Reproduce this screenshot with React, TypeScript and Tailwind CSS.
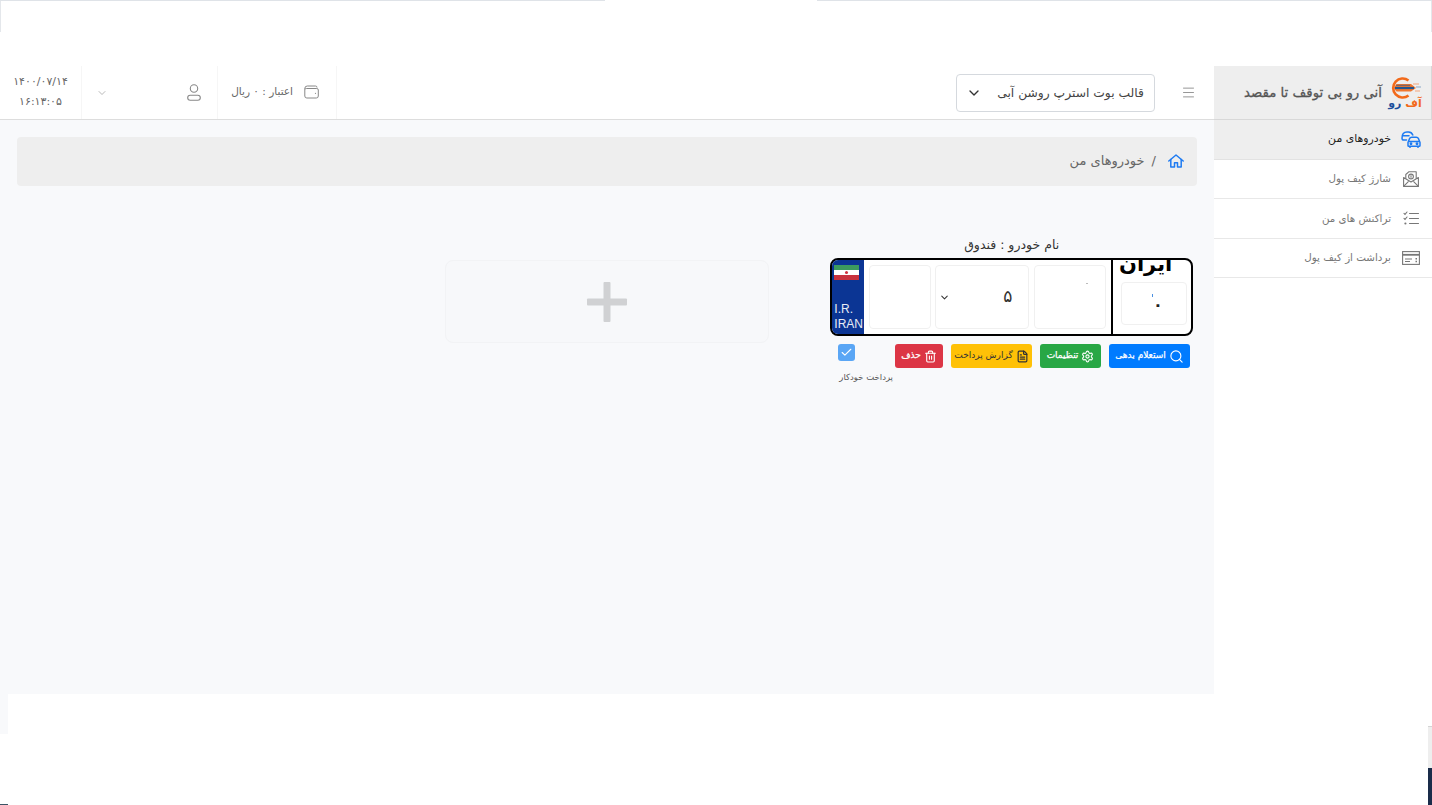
import React from 'react';
import { ChevronDown, Menu, Search, Settings, FileText, Trash2, Check } from 'lucide-react';

const CarsIcon = () => (
  <svg width="20" height="17" viewBox="0 0 20 17" fill="none" stroke="#1e7bf2" strokeWidth="1.5" strokeLinecap="round" strokeLinejoin="round">
    <path d="M5.500 9H2.800A1.800 1.800 0 0 1 1 7.200C1 3.500 3 1 6 1h1.500c2 0 3.500 1 4.300 3" />
    <path d="M2 4.800h6" />
    <path d="M7 14.500v-3L8.500 7.700A2.500 2.500 0 0 1 10.800 6.300h4.400a2.500 2.500 0 0 1 2.300 1.400L19 11.500v3a.8.8 0 0 1-.8.8H7.800a.8.8 0 0 1-.8-.8z" />
    <path d="M8 10.500h10" />
    <circle cx="10" cy="12.800" r=".7" fill="#1e7bf2" />
    <circle cx="16" cy="12.800" r=".7" fill="#1e7bf2" />
    <path d="M9 15.500v1M17 15.500v1" />
  </svg>
);

const EnvelopeIcon = () => (
  <svg width="16" height="16" viewBox="0 0 16 16" fill="none" stroke="#777" strokeWidth="1.100" strokeLinejoin="round">
    <path d="M.6 6.500V15.400h14.800V6.500L8 11 .6 6.500z" />
    <path d="M2.800 7.800V3.500L6 .7h7.200v7.100" />
    <circle cx="8" cy="5.500" r="2.400" />
    <path d="M8 4.300v2.400" />
    <path d="M.6 15.400l5-5M15.400 15.400l-5-5" />
  </svg>
);

const ChecklistIcon = () => (
  <svg width="16" height="15" viewBox="0 0 16 15" fill="none" stroke="#777" strokeWidth="1.100" strokeLinecap="round">
    <path d="M1 2.400l1 1 2-2.400M1 7.400l1 1 2-2.400" />
    <circle cx="2.400" cy="12.500" r="1.100" fill="#777" stroke="none" />
    <path d="M6.500 2.500h9M6.500 7.500h9M6.500 12.500h9" />
  </svg>
);

const CardIcon = () => (
  <svg width="18" height="14" viewBox="0 0 18 14" fill="none" stroke="#777" strokeWidth="1.100">
    <rect x=".6" y=".6" width="16.800" height="12.800" />
    <path d="M.6 3.800h16.800" strokeWidth="1.800" />
    <path d="M3 8h7M3 10.500h5" />
    <path d="M13.500 7.800h1.500M13.500 10.500h1.500" strokeWidth="1.400" />
  </svg>
);

const WalletIcon = () => (
  <svg width="15" height="14" viewBox="0 0 15 14" fill="none" stroke="#888" strokeWidth="1">
    <path d="M.8 3.500V11a2 2 0 0 0 2 2h9.500a2 2 0 0 0 2-2V5a1.500 1.500 0 0 0-1.500-1.500H2.600A1.800 1.800 0 0 1 .8 3.500zm0 0A2.500 2.500 0 0 1 3.300 1h8.200a1.500 1.500 0 0 1 1.500 1.500" />
    <circle cx="11.500" cy="8.300" r=".6" fill="#888" stroke="none" />
  </svg>
);

const UserIcon = () => (
  <svg width="14" height="17" viewBox="0 0 14 17" fill="none" stroke="#888" strokeWidth="1.100">
    <circle cx="7" cy="4.500" r="3.700" />
    <rect x=".7" y="11.300" width="12.600" height="5" rx="2.500" />
  </svg>
);

const HomeIcon = () => (
  <svg width="16" height="14" viewBox="0 0 16 14" fill="none" stroke="#1e7bf2" strokeWidth="1.500" strokeLinejoin="round" strokeLinecap="round">
    <path d="M.8 7L8 1l7.200 6" />
    <path d="M2.800 5.500V13h3.700V8.800h3V13h3.700V5.500" />
  </svg>
);

const Logo = () => (
  <div className="flex flex-col items-center w-[32px] shrink-0">
    <svg width="32" height="24" viewBox="0 0 32 24" fill="none">
      <path d="M19.500 4.500A9.500 9.500 0 1 0 19.500 19.500" stroke="#f26a1b" strokeWidth="2.600" />
      <path d="M4.500 12L7.500 8h14.500l5 4-5 3.500H7.500z" fill="#f0772f" />
      <path d="M6 12h19" stroke="#22568f" strokeWidth="2.200" />
      <path d="M7 9.300h14" stroke="#22568f" strokeWidth=".7" />
      <path d="M24 8h6M26 15h5" stroke="#f5a57a" strokeWidth="1" />
      <path d="M27 11h5" stroke="#8aa6c5" strokeWidth="1" />
    </svg>
    <div className="text-[11px] leading-[11px] font-bold whitespace-nowrap -mt-[2px]">
      <span className="text-[#f26a1b]">آف</span>
      <span className="text-[#1b4f9c]"> رو</span>
    </div>
  </div>
);

const menuItems = [
  { label: 'خودروهای من', icon: <CarsIcon />, active: true },
  { label: 'شارژ کیف پول', icon: <EnvelopeIcon /> },
  { label: 'تراکنش های من', icon: <ChecklistIcon /> },
  { label: 'برداشت از کیف پول', icon: <CardIcon /> },
];

const Sidebar = () => (
  <aside className="w-[218px] shrink-0 bg-white">
    <div className="h-[54px] bg-[#eeeeee] border-r border-b border-[#d8d8d8] flex items-center pr-[10px] gap-[7px]">
      <Logo />
      <span className="text-[13.300px] text-[#555] [-webkit-text-stroke:0.3px_#555]">آنی رو بی توقف تا مقصد</span>
    </div>
    {menuItems.map(item => (
      <div
        key={item.label}
        className={`h-[39.500px] flex items-center border-b pr-[11px] ${item.active ? 'bg-[#eeeeee] border-[#e2e2e2] text-[#222]' : 'bg-white border-[#e8e8e8] text-[#777]'}`}
      >
        <span className="w-[20px] flex justify-center shrink-0">{item.icon}</span>
        <span className={`mr-[10px] ${item.active ? 'text-[10.900px]' : 'text-[10.300px]'}`}>{item.label}</span>
      </div>
    ))}
  </aside>
);

const Header = () => (
  <header className="h-[54px] bg-white border-b border-[#dddddd] flex items-stretch">
    <div className="w-[59px] flex items-center pr-[18px] shrink-0">
      <Menu size={15} color="#888" strokeWidth={1.4} />
    </div>
    <div className="w-[199px] h-[38px] mt-[8px] bg-white border border-[#d5d9de] rounded-[4px] flex items-center justify-between pr-[10px] pl-[9px] shrink-0">
      <span className="text-[12.300px] text-[#444]">قالب بوت استرپ روشن آبی</span>
      <ChevronDown size={16} color="#333" strokeWidth={2} />
    </div>
    <div className="w-[620px] border-l border-[#f6f6f6] shrink-0" />
    <div className="w-[119px] border-l border-[#f6f6f6] flex items-center shrink-0 pr-[17px] gap-[11px] pb-[1px]">
      <WalletIcon />
      <span className="text-[10.500px] text-[#666]">اعتبار : ۰ ریال</span>
    </div>
    <div className="w-[136px] border-l border-[#f6f6f6] flex items-center shrink-0 pr-[16px]">
      <UserIcon />
      <ChevronDown size={12} color="#999" strokeWidth={1.4} className="shrink-0 mr-[79px]" />
    </div>
    <div className="flex-1 flex flex-col items-center justify-center text-[11px] leading-[20px] text-[#666] -mt-[2px]">
      <span dir="ltr">۱۴۰۰/۰۷/۱۴</span>
      <span dir="ltr">۱۶:۱۳:۰۵</span>
    </div>
  </header>
);

const PlateBox = ({ className, children }: { className: string; children?: React.ReactNode }) => (
  <div className={`h-[64px] bg-white border border-[#f0f0f0] rounded-[4px] relative ${className}`}>{children}</div>
);

const Plate = () => (
  <div dir="ltr" className="h-[78px] border-2 border-black rounded-[8px] bg-white flex overflow-hidden">
    <div className="w-[32px] bg-[#0b3594] shrink-0 flex flex-col justify-between pl-[2px] pt-[5px] text-[#e8ecf5] text-[12px] leading-[15px]">
      <div className="w-[25px] h-[15px] flex flex-col">
        <div className="h-[5px] bg-[#3c9a5f]" />
        <div className="h-[5px] bg-white flex justify-center items-center"><div className="w-[3px] h-[3px] rounded-full bg-[#d0303c]" /></div>
        <div className="h-[5px] bg-[#c8323f]" />
      </div>
      <div className="font-['Liberation_Sans'] pb-[2px]">
        <div>I.R.</div>
        <div>IRAN</div>
      </div>
    </div>
    <div className="flex-1 flex items-center pl-[5px]">
      <PlateBox className="w-[62px]" />
      <PlateBox className="w-[94px] ml-[4px] flex items-center justify-between pl-[3px] pr-[16px]">
        <ChevronDown size={11} color="#333" strokeWidth={2.200} />
        <span className="text-[17px] text-[#333]">۵</span>
      </PlateBox>
      <PlateBox className="w-[72px] ml-[5px]">
        <div className="absolute right-[17px] top-[17px] w-[2px] h-px bg-[#bbb]" />
      </PlateBox>
    </div>
    <div className="w-[2px] bg-black shrink-0" />
    <div className="w-[78px] shrink-0 flex flex-col overflow-hidden">
      <div className="h-[24px] -mt-[4px] pl-[6px] leading-[16px] text-[21px] text-black overflow-hidden font-bold tracking-[4px] whitespace-nowrap">
        <span dir="rtl">ایران</span>
      </div>
      <div className="w-[66px] ml-[8px] mt-[2px] h-[43px] border border-[#f0f0f0] rounded-[4px] flex items-center justify-center text-[16px] text-[#222] font-bold relative">
        <span className="ml-[8px] mt-[2px]">۰</span>
        <div className="absolute left-[30px] top-[11px] w-px h-[3px] bg-[#4a90e2]" />
      </div>
    </div>
  </div>
);

const buttons = [
  { label: 'استعلام بدهی', icon: <Search size={15} strokeWidth={1.8} />, cls: 'w-[81px] ml-[8px] bg-[#007bff] text-white [-webkit-text-stroke:0.25px_#fff]' },
  { label: 'تنظیمات', icon: <Settings size={13} strokeWidth={2} />, cls: 'w-[61px] ml-[8px] bg-[#28a745] text-white [-webkit-text-stroke:0.25px_#fff]' },
  { label: 'گزارش پرداخت', icon: <FileText size={13} strokeWidth={2.200} />, cls: 'w-[81px] ml-[8px] bg-[#ffc107] text-[#333]' },
  { label: 'حذف', icon: <Trash2 size={13} strokeWidth={2} />, cls: 'w-[48px] ml-[2px] bg-[#dc3545] text-white [-webkit-text-stroke:0.25px_#fff]' },
];

const CarCard = () => (
  <div className="px-[21px] pt-[50px]">
    <div className="h-[18px] leading-[18px] text-center text-[12.500px] text-[#333]">نام خودرو : فندوق</div>
    <div className="mt-[4px]"><Plate /></div>
    <div className="flex mt-[8px] pr-[3px]">
      {buttons.map(b => (
        <div key={b.label} className={`h-[24px] rounded-[3px] flex items-center justify-center gap-[3px] text-[9px] whitespace-nowrap shrink-0 ${b.cls}`}>
          {b.icon}
          <span>{b.label}</span>
        </div>
      ))}
      <div className="flex flex-col items-start w-[55px] shrink-0">
        <div className="w-[17px] h-[17px] rounded-[3px] bg-[#5aa6f5] flex items-center justify-center self-end">
          <Check size={13} color="#fff" strokeWidth={2} />
        </div>
        <span className="text-[8.500px] text-[#555] mt-[10px] whitespace-nowrap">پرداخت خودکار</span>
      </div>
    </div>
  </div>
);

const AddCard = () => (
  <div className="px-[40px] pt-[74px]">
    <div className="h-[83px] bg-[#f7f8fa] border border-[#f2f3f5] rounded-[8px] flex items-center justify-center">
      <svg width="42" height="42" viewBox="0 0 42 42">
        <rect x="17.500" y="1" width="7" height="40" rx="1" fill="#d0d1d3" />
        <rect x="1" y="17.500" width="40" height="7" rx="1" fill="#d0d1d3" />
      </svg>
    </div>
  </div>
);

const App: React.FC = () => {
  return (
    <div dir="rtl" className="w-[1432px] h-[805px] bg-white overflow-hidden font-['DejaVu_Sans',sans-serif]">
      {/* top strip */}
      <div dir="ltr" className="h-[66px]">
        <div className="flex justify-between h-px">
          <div className="w-[605px] bg-[#dfe3e8]" />
          <div className="w-[615px] bg-[#dfe3e8]" />
        </div>
        <div className="h-[31px] border-x border-[#e4e7eb]" />
      </div>

      <div className="h-[628px] flex">
        <Sidebar />
        <main className="flex-1 bg-[#f8f9fb] flex flex-col">
          <Header />
          <div className="mx-[17px] mt-[17px] h-[49px] bg-[#eeeeee] rounded-[4px] flex items-center pr-[13px] pb-[1px] text-[13px] text-[#666]">
            <HomeIcon />
            <span className="mr-[12px] ml-[7px]">/</span>
            <span>خودروهای من</span>
          </div>
          <div className="grid grid-cols-3">
            <CarCard />
            <AddCard />
          </div>
        </main>
      </div>

      {/* bottom leftovers */}
      <div dir="ltr" className="h-[111px] flex justify-between">
        <div className="w-[8px] flex flex-col">
          <div className="h-[40px] bg-[#f8f9fb]" />
          <div className="flex-1" />
          <div className="h-px bg-[#3b5565]" />
        </div>
        <div className="w-[4px] flex flex-col pt-[32px]">
          <div className="h-[42px] bg-[#eeeeee] border-t border-[#d4d4d4]" />
          <div className="flex-1 bg-[#1a2c4a]" />
        </div>
      </div>
    </div>
  );
};

export default App;
